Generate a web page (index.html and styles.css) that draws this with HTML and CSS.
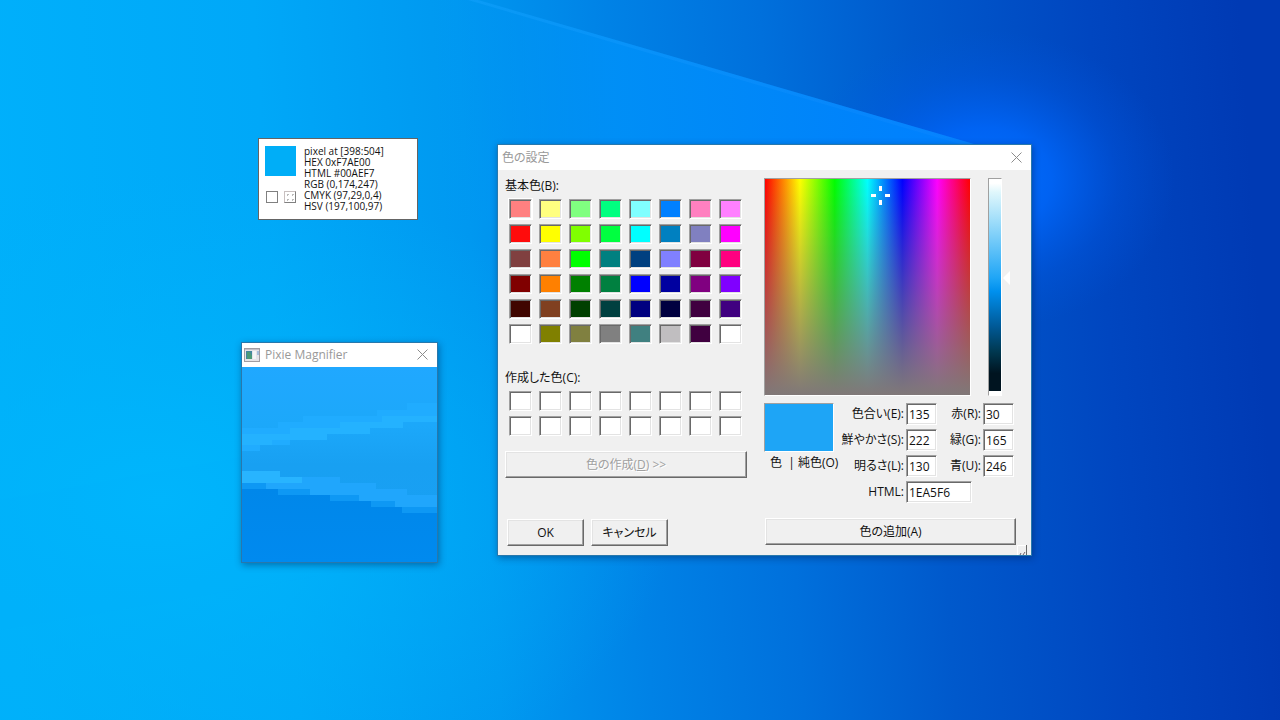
FILE: index.html
```html
<!DOCTYPE html>
<html lang="ja">
<head>
<meta charset="utf-8">
<title>色の設定</title>
<link rel="stylesheet" href="styles.css">
</head>
<body>
<main class="desktop">
<svg class="wallpaper" viewBox="0 0 1280 720" preserveAspectRatio="none" aria-hidden="true">
  <defs>
    <linearGradient id="base" gradientUnits="userSpaceOnUse" x1="0" y1="400" x2="1260" y2="320">
      <stop offset="0" stop-color="#00b0fb"/><stop offset=".22" stop-color="#00a8f8"/><stop offset=".38" stop-color="#0098f0"/><stop offset=".5" stop-color="#0082e6"/><stop offset=".62" stop-color="#0070dc"/><stop offset=".74" stop-color="#0059cc"/><stop offset=".88" stop-color="#0046c0"/><stop offset="1" stop-color="#003ab4"/>
    </linearGradient>
    <radialGradient id="glow" gradientUnits="userSpaceOnUse" cx="0" cy="0" r="1" gradientTransform="translate(985 180) scale(190 150)">
      <stop offset="0" stop-color="#0070ff"/><stop offset=".35" stop-color="#0066fa" stop-opacity=".85"/><stop offset=".7" stop-color="#005cec" stop-opacity=".3"/><stop offset="1" stop-color="#0058e0" stop-opacity="0"/>
    </radialGradient>
    <linearGradient id="sky" gradientUnits="userSpaceOnUse" x1="430" y1="0" x2="960" y2="0">
      <stop offset="0" stop-color="#009cf8" stop-opacity="0"/><stop offset=".35" stop-color="#0092fa" stop-opacity=".8"/><stop offset="1" stop-color="#0080ff"/>
    </linearGradient>
    <radialGradient id="low" gradientUnits="userSpaceOnUse" cx="0" cy="0" r="1" gradientTransform="translate(160 500) scale(520 330)">
      <stop offset="0" stop-color="#00b6fc"/><stop offset="1" stop-color="#00b0f6" stop-opacity="0"/>
    </radialGradient>
    <linearGradient id="ray" x1="0" x2="1"><stop offset="0" stop-color="#18a4ff" stop-opacity=".4"/><stop offset="1" stop-color="#1688ff" stop-opacity=".25"/></linearGradient>
  </defs>
  <rect width="1280" height="720" fill="url(#base)"/>
  <rect width="1280" height="720" fill="url(#low)"/>
  <rect width="1280" height="720" fill="url(#glow)"/>
  <path d="M430 -14L974 144V220H430z" fill="url(#sky)"/>
  <path d="M468 0h10L974 144h-14z" fill="url(#ray)"/>
  <path d="M0 500L500 411V545L0 630z" fill="#00baff" opacity=".05"/>
</svg>

<section class="readout" aria-label="Pixel information">
  <div class="readout-side">
    <div class="readout-color"></div>
    <div class="readout-marks"><i class="mark"></i><i class="mark dotted"></i></div>
  </div>
  <p class="readout-text">pixel at [398:504]<br>HEX 0xF7AE00<br>HTML #00AEF7<br>RGB (0,174,247)<br>CMYK (97,29,0,4)<br>HSV (197,100,97)</p>
</section>

<section class="window magnifier">
  <header class="titlebar">
    <svg class="app-icon" width="16" height="14" viewBox="0 0 16 14" aria-hidden="true">
      <rect x=".5" y=".5" width="15" height="13" fill="#e6e4e8" stroke="#a19da3"/><path d="M1 1.5h14" stroke="#c4c0c8"/><rect x="2" y="3" width="6" height="8" fill="#4386a0"/><path d="M3 4h3l2 4v3H3z" fill="#4c9a78"/><rect x="9" y="3" width="3" height="8" fill="#f5f5f7"/><rect x="13" y="3" width="2" height="4" fill="#a8bedc"/>
    </svg>
    <h1 class="title">Pixie Magnifier</h1>
    <button class="close" aria-label="閉じる"><svg width="11" height="11" viewBox="0 0 11 11"><path d="M.5.5l10 10M10.500.5l-10 10" stroke="#8c8c8c" fill="none"/></svg></button>
  </header>
  <svg class="lens" viewBox="0 0 195 195" preserveAspectRatio="none" role="img" aria-label="Magnified view">
    <defs>
      <linearGradient id="la" x2="0" y2="1"><stop offset="0" stop-color="#20a8ff"/><stop offset=".3" stop-color="#1ca8fa"/><stop offset=".5" stop-color="#18a0f2"/><stop offset="1" stop-color="#1a9ff4"/></linearGradient>
      <linearGradient id="lb" x2="0" y2="1"><stop offset="0" stop-color="#0087ea"/><stop offset="1" stop-color="#008aef"/></linearGradient>
    </defs>
    <rect width="195" height="195" fill="url(#la)"/>
    <path d="M0 61H36V55H61V49H135V43H165V36H195V55H161V61H128V67H85V73H48V78H18V84H0z" fill="#20acff"/>
    <path d="M0 67H48V61H98V55H140V49H195V55H161V61H128V67H85V73H30V78H0z" fill="#28b6ff" opacity=".6"/>
    <path d="M0 104H38V110H98V116H134V122H165V128H195V195H0z" fill="#20a6fc"/>
    <path d="M0 104H38V110H60V116H0z" fill="#28b4ff"/>
    <path d="M0 116H24V122H68V128H117V134H153V140H195V195H0z" fill="#0e98f4"/>
    <path d="M0 122H36V128H88V134H129V140H160V146H195V195H0z" fill="url(#lb)"/>
  </svg>
</section>

<section class="window dialog">
  <header class="titlebar">
    <h2 class="title">色の設定</h2>
    <button class="close" aria-label="閉じる"><svg width="11" height="11" viewBox="0 0 11 11"><path d="M.5.5l10 10M10.500.5l-10 10" stroke="#8c8c8c" fill="none"/></svg></button>
  </header>
  <form class="dialog-body" onsubmit="return false">
    <div class="palette">
      <h3 class="caption" id="basic">基本色(B):</h3>
      <div class="swatches basic" role="group" aria-labelledby="basic">
        <button class="swatch selected" style="background:#ff8080"></button><button class="swatch" style="background:#ffff80"></button><button class="swatch" style="background:#80ff80"></button><button class="swatch" style="background:#00ff80"></button><button class="swatch" style="background:#80ffff"></button><button class="swatch" style="background:#0080ff"></button><button class="swatch" style="background:#ff80c0"></button><button class="swatch" style="background:#ff80ff"></button>
        <button class="swatch" style="background:#ff0c0c"></button><button class="swatch" style="background:#ffff00"></button><button class="swatch" style="background:#80ff00"></button><button class="swatch" style="background:#00ff40"></button><button class="swatch" style="background:#00ffff"></button><button class="swatch" style="background:#0080c0"></button><button class="swatch" style="background:#8080c0"></button><button class="swatch" style="background:#ff00ff"></button>
        <button class="swatch" style="background:#804040"></button><button class="swatch" style="background:#ff8040"></button><button class="swatch" style="background:#00ff00"></button><button class="swatch" style="background:#008080"></button><button class="swatch" style="background:#004080"></button><button class="swatch" style="background:#8080ff"></button><button class="swatch" style="background:#800040"></button><button class="swatch" style="background:#ff0080"></button>
        <button class="swatch" style="background:#800000"></button><button class="swatch" style="background:#ff8000"></button><button class="swatch" style="background:#008000"></button><button class="swatch" style="background:#008040"></button><button class="swatch" style="background:#0000ff"></button><button class="swatch" style="background:#0000a0"></button><button class="swatch" style="background:#800080"></button><button class="swatch" style="background:#8000ff"></button>
        <button class="swatch" style="background:#400600"></button><button class="swatch" style="background:#804020"></button><button class="swatch" style="background:#004000"></button><button class="swatch" style="background:#004040"></button><button class="swatch" style="background:#000080"></button><button class="swatch" style="background:#000040"></button><button class="swatch" style="background:#400040"></button><button class="swatch" style="background:#400080"></button>
        <button class="swatch" style="background:#ffffff"></button><button class="swatch" style="background:#808000"></button><button class="swatch" style="background:#808040"></button><button class="swatch" style="background:#808080"></button><button class="swatch" style="background:#408080"></button><button class="swatch" style="background:#c0bec0"></button><button class="swatch" style="background:#400040"></button><button class="swatch" style="background:#ffffff"></button>
      </div>
      <h3 class="caption" id="custom">作成した色(C):</h3>
      <div class="swatches" role="group" aria-labelledby="custom">
        <button class="swatch"></button><button class="swatch"></button><button class="swatch"></button><button class="swatch"></button><button class="swatch"></button><button class="swatch"></button><button class="swatch"></button><button class="swatch"></button>
        <button class="swatch"></button><button class="swatch"></button><button class="swatch"></button><button class="swatch"></button><button class="swatch"></button><button class="swatch"></button><button class="swatch"></button><button class="swatch"></button>
      </div>
      <button class="btn define" disabled>色の作成(<u>D</u>) &gt;&gt;</button>
      <div class="actions"><button class="btn">OK</button><button class="btn">キャンセル</button></div>
    </div>
    <div class="mixer">
      <div class="pickers">
        <div class="spectrum">
          <svg class="cross" width="19" height="19" viewBox="0 0 19 19" fill="#fff" aria-hidden="true"><path d="M8 0h3v5H8zM8 14h3v5H8zM0 8h5v3H0zM14 8h5v3h-5z"/></svg>
        </div>
        <div class="luminance"></div>
        <svg class="pointer" width="7" height="14" viewBox="0 0 7 14" aria-hidden="true"><path d="M7 0v14L0 7z" fill="#fff"/></svg>
      </div>
      <div class="values">
        <div class="preview"><div class="preview-color"></div><span class="preview-label">色&nbsp; | 純色(O)</span></div>
        <div class="fields">
          <label for="hue">色合い(E):</label><input id="hue" value="135">
          <label for="red">赤(R):</label><input id="red" value="30">
          <label for="sat">鮮やかさ(S):</label><input id="sat" value="222">
          <label for="green">緑(G):</label><input id="green" value="165">
          <label for="lum">明るさ(L):</label><input id="lum" value="130">
          <label for="blue">青(U):</label><input id="blue" value="246">
          <label for="html">HTML:</label><input id="html" class="html" value="1EA5F6">
        </div>
      </div>
      <button class="btn add">色の追加(A)</button>
    </div>
    <svg class="grip" width="10" height="10" viewBox="0 0 10 10" aria-hidden="true"><path d="M.5 10V.5H9" fill="none" stroke="#fff"/><path d="M9.500 0v10" stroke="#696969"/><path d="M3 10l1-2M6 10l2-3" stroke="#706068" fill="none"/></svg>
  </form>
</section>
</main>
</body>
</html>
```
FILE: styles.css
```css
* { box-sizing: border-box; }
body {
  margin: 0;
  font: 12px/16px "Open Sans", "Noto Sans CJK JP", sans-serif;
  font-feature-settings: "palt";
  color: #111;
}
button, input { font: inherit; font-feature-settings: inherit; color: inherit; border-radius: 0; margin: 0; }
h1, h2, h3, p { margin: 0; font: inherit; font-feature-settings: inherit; }

.desktop { position: relative; min-height: 100vh; overflow: hidden; background: #0090ee; }
.wallpaper { position: absolute; inset: 0; width: 100%; height: 100%; }

/* pixel readout */
.readout {
  position: absolute; left: 258px; top: 138px; width: 160px;
  display: flex; gap: 8px; padding: 7px 6px 7px;
  background: #fff; border: 1px solid #646464;
}
.readout-side { display: flex; flex-direction: column; gap: 15px; width: 31px; }
.readout-color { height: 30px; background: #00aef7; }
.readout-marks { display: flex; gap: 6px; padding-left: 1px; }
.mark { flex: none; width: 12px; height: 12px; border: 1px solid #808080; }
.mark.dotted { border-color: #c8c0c0 #808080 #808080 #c8c0c0; background: radial-gradient(#bbb 1px, transparent 1px) 0 0 / 5px 5px; }
.readout-text { font-size: 10px; line-height: 11px; white-space: nowrap; }

/* windows */
.window { position: absolute; border: 1px solid #2878ac; box-shadow: 1px 2px 7px rgba(0, 30, 80, .45); }
.titlebar { display: flex; align-items: center; background: #fff; color: #999; }
.title { flex: 1; }
.close { display: flex; padding: 0; border: 0; background: none; }

.magnifier { left: 241px; top: 342px; width: 197px; }
.magnifier .titlebar { height: 24px; padding: 0 9px 1px 2px; gap: 5px; }
.lens { display: block; width: 100%; height: 195px; }

.dialog { left: 497px; top: 144px; width: 535px; }
.dialog .titlebar { height: 25px; padding: 0 9px 0 4px; }
.dialog-body {
  position: relative; display: flex; gap: 17px;
  padding: 8px 14px 9px 7px; background: #f0f0f0;
}
.grip { position: absolute; right: 4px; bottom: 0; }

/* palette */
.palette { width: 242px; display: flex; flex-direction: column; }
.caption { height: 21px; }
.swatches {
  display: grid; grid-template-columns: repeat(8, 23px); gap: 5px 7px;
  padding-left: 4px;
}
.basic { margin-bottom: 26px; }
.swatch {
  height: 20px; padding: 0; background: #fff;
  border: 1px solid; border-color: #a0a0a0 #fff #fff #a0a0a0;
  box-shadow: inset 1px 1px #696969, inset -1px -1px #e3e3e3;
}
.swatch.selected { outline: 1px solid #fff; }
.btn {
  height: 27px; padding: 0; background: #f0f0f0;
  border: 1px solid; border-color: #fff #696969 #696969 #fff;
  box-shadow: inset -1px -1px #a0a0a0, inset 1px 1px #e3e3e3;
}
.btn:disabled { color: #a0a0a0; text-shadow: 1px 1px #fff; }
.define { margin-top: 15px; }
.actions { display: flex; gap: 7px; margin-top: 41px; padding-left: 2px; }
.actions .btn { width: 77px; }

/* mixer */
.mixer { flex: 1; display: flex; flex-direction: column; }
.pickers { display: flex; height: 218px; }
.spectrum {
  position: relative; width: 207px; margin-right: 17px;
  border: 1px solid; border-color: #a0a0a0 #fff #fff #a0a0a0;
  background: linear-gradient(rgba(128, 120, 120, 0), #807878),
    linear-gradient(90deg, #f00, #ff0 17%, #0f0 34%, #0ff 50%, #00f 67%, #f0f 84%, #f00);
}
.cross { position: absolute; left: 106px; top: 7px; }
.luminance {
  width: 14px; border: 1px solid; border-color: #a0a0a0 #fff #fff #a0a0a0;
  background: linear-gradient(#fff 0 2%, #e0f7fc 6%, #9cdcfa 20%, #1ea5f6 46%, #0090ee 52%, #005a98 68%, #003850 80%, #001420 90% 98%, #fff 98%);
}
.pointer { margin: 93px 0 0 1px; }
.values { display: flex; justify-content: space-between; margin-top: 7px; padding-right: 3px; }
.preview { width: 76px; display: flex; flex-direction: column; gap: 3px; white-space: nowrap; }
.preview-color { width: 70px; height: 49px; background: #1ea5f6; border: 1px solid; border-color: #a0a0a0 #fff #fff #a0a0a0; }
.preview-label { padding-left: 6px; }
.fields { display: grid; grid-template-columns: auto 31px 42px 31px; gap: 4px 2px; white-space: nowrap; }
.fields label { text-align: right; padding-top: 3px; }
.fields input {
  width: 100%; height: 22px; padding: 0 2px; background: #fff;
  border: 1px solid; border-color: #a0a0a0 #fff #fff #a0a0a0;
  box-shadow: inset 1px 1px #696969, inset -1px -1px #e3e3e3;
}
.fields .html { grid-column: span 2; width: 66px; }
.add { width: 251px; margin: 15px 0 0 1px; }
```
